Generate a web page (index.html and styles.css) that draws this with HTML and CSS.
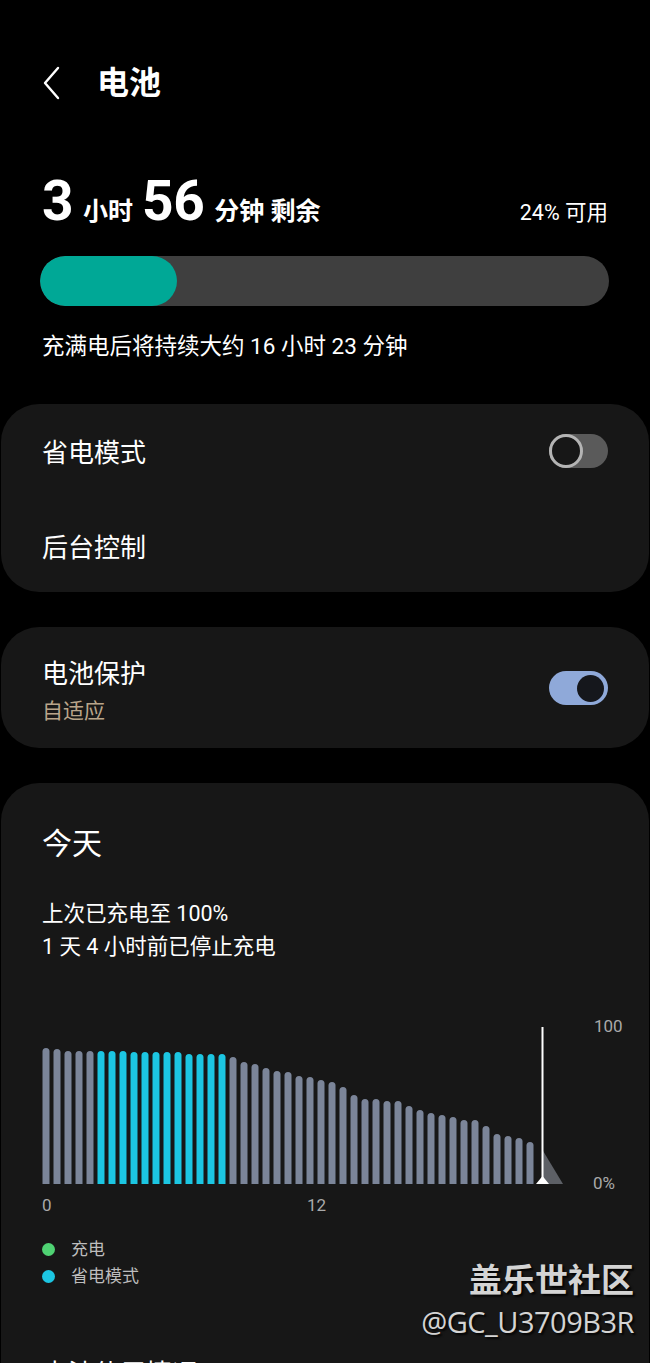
FILE: index.html
```html
<!DOCTYPE html>
<html lang="zh-CN">
<head>
<meta charset="utf-8">
<title>电池</title>
<link rel="stylesheet" href="styles.css">
</head>
<body>
<div class="page">
  <header class="header">
    <svg class="back" width="20" height="34" viewBox="0 0 20 34"><path d="M16 2 L3 17 L16 32" fill="none" stroke="#fff" stroke-width="2.4" stroke-linecap="round" stroke-linejoin="round"/></svg>
    <h1 class="title">电池</h1>
  </header>

  <section class="summary">
    <div class="remain"><span class="big">3</span><span class="unit">小时</span><span class="big">56</span><span class="unit">分钟 剩余</span></div>
    <div class="avail">24% 可用</div>
  </section>

  <div class="bar"><div class="bar-fill" style="width:24%"></div></div>
  <p class="full-note">充满电后将持续大约 16 小时 23 分钟</p>

  <section class="card card-list">
    <div class="row">
      <span class="row-title">省电模式</span>
      <span class="switch switch-off"><span class="knob"></span></span>
    </div>
    <div class="row">
      <span class="row-title">后台控制</span>
    </div>
  </section>

  <section class="card card-protect">
    <div class="row row-protect">
      <div class="col">
        <span class="row-title">电池保护</span>
        <span class="row-sub">自适应</span>
      </div>
      <span class="switch switch-on"><span class="knob"></span></span>
    </div>
  </section>

  <section class="card card-today">
    <h2 class="today">今天</h2>
    <p class="info">上次已充电至 100%<br>1 天 4 小时前已停止充电</p>

    <svg class="chart" width="648" height="210" viewBox="0 0 648 210">
      <defs>
        <clipPath id="base"><rect x="0" y="0" width="648" height="174"/></clipPath>
      </defs>
      <g clip-path="url(#base)" fill="#7b8599">
        <rect x="41.5" y="38" width="7" height="142" rx="3.5"/>
        <rect x="52.5" y="39" width="7" height="141" rx="3.5"/>
        <rect x="63.5" y="41" width="7" height="139" rx="3.5"/>
        <rect x="74.5" y="41" width="7" height="139" rx="3.5"/>
        <rect x="85.5" y="41" width="7" height="139" rx="3.5"/>
        <g fill="#1cc6e2">
          <rect x="96.5" y="41" width="7" height="139" rx="3.5"/>
          <rect x="107.5" y="41" width="7" height="139" rx="3.5"/>
          <rect x="118.5" y="41" width="7" height="139" rx="3.5"/>
          <rect x="129.5" y="42" width="7" height="138" rx="3.5"/>
          <rect x="140.5" y="42" width="7" height="138" rx="3.5"/>
          <rect x="151.5" y="42" width="7" height="138" rx="3.5"/>
          <rect x="162.5" y="42" width="7" height="138" rx="3.5"/>
          <rect x="173.5" y="42" width="7" height="138" rx="3.5"/>
          <rect x="184.5" y="44" width="7" height="136" rx="3.5"/>
          <rect x="195.5" y="44" width="7" height="136" rx="3.5"/>
          <rect x="206.5" y="44" width="7" height="136" rx="3.5"/>
          <rect x="217.5" y="44" width="7" height="136" rx="3.5"/>
        </g>
        <rect x="228.5" y="47" width="7" height="133" rx="3.5"/>
        <rect x="239.5" y="52" width="7" height="128" rx="3.5"/>
        <rect x="250.5" y="54" width="7" height="126" rx="3.5"/>
        <rect x="261.5" y="58" width="7" height="122" rx="3.5"/>
        <rect x="272.5" y="61" width="7" height="119" rx="3.5"/>
        <rect x="283.5" y="62" width="7" height="118" rx="3.5"/>
        <rect x="294.5" y="66" width="7" height="114" rx="3.5"/>
        <rect x="305.5" y="67" width="7" height="113" rx="3.5"/>
        <rect x="316.5" y="70" width="7" height="110" rx="3.5"/>
        <rect x="327.5" y="72" width="7" height="108" rx="3.5"/>
        <rect x="338.5" y="77" width="7" height="103" rx="3.5"/>
        <rect x="349.5" y="85" width="7" height="95" rx="3.5"/>
        <rect x="360.5" y="89" width="7" height="91" rx="3.5"/>
        <rect x="371.5" y="89" width="7" height="91" rx="3.5"/>
        <rect x="382.5" y="91" width="7" height="89" rx="3.5"/>
        <rect x="393.5" y="91" width="7" height="89" rx="3.5"/>
        <rect x="404.5" y="96" width="7" height="84" rx="3.5"/>
        <rect x="415.5" y="100" width="7" height="80" rx="3.5"/>
        <rect x="426.5" y="103" width="7" height="77" rx="3.5"/>
        <rect x="437.5" y="105" width="7" height="75" rx="3.5"/>
        <rect x="448.5" y="107" width="7" height="73" rx="3.5"/>
        <rect x="459.5" y="110" width="7" height="70" rx="3.5"/>
        <rect x="470.5" y="110" width="7" height="70" rx="3.5"/>
        <rect x="481.5" y="116" width="7" height="64" rx="3.5"/>
        <rect x="492.5" y="124" width="7" height="56" rx="3.5"/>
        <rect x="503.5" y="126" width="7" height="54" rx="3.5"/>
        <rect x="514.5" y="128" width="7" height="52" rx="3.5"/>
        <rect x="525.5" y="132" width="7" height="48" rx="3.5"/>
      </g>
      <polygon points="541.5,140 562,174 541.5,174" fill="#5d6066"/>
      <rect x="540.5" y="17" width="2" height="157" fill="#fff"/>
      <polygon points="535,174 548,174 541.5,166" fill="#fff"/>
      <text class="axis" x="593" y="22">100</text>
      <text class="axis" x="592" y="179">0%</text>
      <text class="axis" x="41" y="201">0</text>
      <text class="axis" x="306" y="201">12</text>
    </svg>

    <ul class="legend">
      <li><span class="dot dot-green"></span>充电</li>
      <li><span class="dot dot-cyan"></span>省电模式</li>
    </ul>

    <h2 class="next">电池使用情况</h2>
  </section>

  <div class="watermark">
    <div class="wm-title">盖乐世社区</div>
    <div class="wm-user">@GC_U3709B3R</div>
  </div>
</div>
</body>
</html>
```

FILE: styles.css
```css
* { box-sizing: border-box; }

html, body {
  margin: 0;
  padding: 0;
  background: #000;
}

body {
  width: 650px;
  height: 1363px;
  overflow: hidden;
  color: #fff;
  font-family: Roboto, "Noto Sans CJK SC", sans-serif;
}

.page {
  position: relative;
  width: 650px;
  height: 1363px;
  padding-top: 60px;
  overflow: hidden;
}

.header {
  display: flex;
  align-items: center;
  height: 46px;
  padding-left: 42px;
}

.back { display: block; }

.title {
  margin: 0 0 0 35px;
  font-size: 32px;
  font-weight: 700;
  line-height: 46px;
}

.summary {
  display: flex;
  justify-content: space-between;
  align-items: baseline;
  margin-top: 65px;
  padding: 0 42px;
  line-height: 60px;
  height: 60px;
}

.remain { white-space: nowrap; }

.big {
  font-size: 55px;
  font-weight: 700;
  letter-spacing: -0.5px;
}

.unit {
  font-size: 25px;
  font-weight: 600;
  margin: 0 9px 0 10px;
}

.avail {
  font-size: 21.5px;
  font-weight: 400;
}

.bar {
  margin: 25px 41px 0 40px;
  height: 50px;
  border-radius: 25px;
  background: #3f3f3f;
  overflow: hidden;
}

.bar-fill {
  height: 100%;
  border-radius: 25px;
  background: #00a896;
}

.full-note {
  margin: 26px 0 0 42px;
  font-size: 22.5px;
  line-height: 28px;
}

.card {
  margin: 35px 1px 0;
  background: #171717;
  border-radius: 38px;
}

.card-list {
  margin-top: 44px;
  height: 188px;
  padding-top: 1px;
}

.row {
  display: flex;
  justify-content: space-between;
  align-items: center;
  height: 95px;
  padding: 0 41px;
}

.row-title {
  font-size: 26px;
  line-height: 36px;
}

.switch {
  position: relative;
  display: block;
  width: 59px;
  height: 34px;
  border-radius: 17px;
}

.switch-off { background: #5a5a5a; margin-top: -4px; }

.switch-off .knob {
  position: absolute;
  left: 0;
  top: 0;
  width: 34px;
  height: 34px;
  border-radius: 50%;
  border: 3px solid #b4b4b4;
  background: #171717;
}

.switch-on { background: #8fa9d9; margin-top: -6px; }

.switch-on .knob {
  position: absolute;
  right: 4px;
  top: 4px;
  width: 27px;
  height: 27px;
  border-radius: 50%;
  background: #15171c;
}

.card-protect { padding: 29px 0 22px; }

.row-protect { height: auto; }

.col { display: flex; flex-direction: column; }

.row-sub {
  margin-top: 4px;
  font-size: 21px;
  line-height: 30px;
  color: #b9a58b;
}

.card-today {
  padding: 41px 0 40px;
  height: 700px;
}

.today {
  margin: 0 0 0 41px;
  font-size: 30px;
  font-weight: 400;
  line-height: 40px;
}

.info {
  margin: 33px 0 0 41px;
  font-size: 21.5px;
  line-height: 33px;
}

.chart {
  display: block;
  margin-top: 47px;
}

.axis {
  font-family: Roboto, sans-serif;
  font-size: 17px;
  fill: #a9a9a9;
}

.legend {
  list-style: none;
  margin: 16px 0 0 41px;
  padding: 0;
  font-size: 17px;
  line-height: 27px;
  color: #bdbdbd;
}

.legend li {
  display: flex;
  align-items: center;
}

.dot {
  width: 13px;
  height: 13px;
  border-radius: 50%;
  margin: 0 16px 0 0;
}

.dot-green { background: #4fd273; }
.dot-cyan { background: #1cc6e2; }

.next {
  margin: 66px 0 0 41px;
  font-size: 26px;
  font-weight: 400;
  line-height: 36px;
}

.watermark {
  position: absolute;
  right: 16px;
  top: 1258px;
  text-align: right;
  color: #d4d4d4;
  text-shadow: 2px 2px 2px rgba(0, 0, 0, 0.85);
}

.wm-title {
  font-family: "Noto Sans CJK SC", sans-serif;
  font-size: 33px;
  font-weight: 700;
  line-height: 40px;
}

.wm-user {
  margin-top: 6px;
  font-family: "Open Sans", "Noto Sans", sans-serif;
  font-size: 29px;
  line-height: 36px;
  letter-spacing: -0.5px;
}
```
